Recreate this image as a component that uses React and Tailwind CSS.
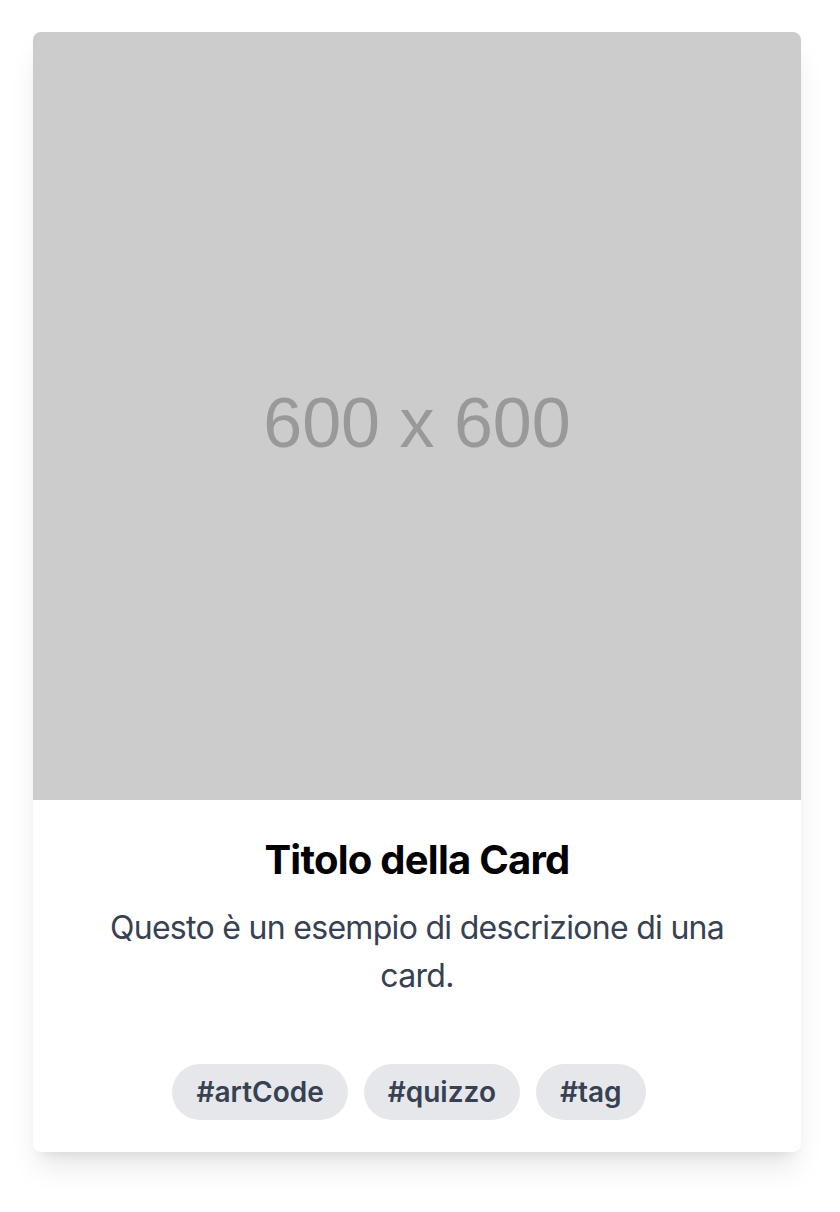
export default function App() {
  const tags = ["#artCode", "#quizzo", "#tag"];
  return (
    <div className="min-h-[1212px] bg-white pt-8 pl-[33px]" style={{ fontFamily: "Inter, 'Noto Sans', sans-serif" }}>
      <div className="w-[768px] rounded-lg overflow-hidden bg-white shadow-[0_20px_30px_-6px_rgb(0_0_0/0.1),0_8px_12px_-8px_rgb(0_0_0/0.1)]">
        <div className="w-[768px] h-[768px] bg-[#cccccc] flex items-center justify-center">
          <span
            className="text-[70px] leading-none text-[#999999] mt-[13px]"
            style={{ fontFamily: "'Liberation Sans', Arial, sans-serif" }}
          >
            600 x 600
          </span>
        </div>
        <div className="px-12 py-8 text-center">
          <div className="font-bold text-[40px] leading-[56px] tracking-[-0.75px] text-black mb-4">Titolo della Card</div>
          <p className="text-[32px] leading-[48px] tracking-[-0.7px] text-[#374151]">
            Questo è un esempio di descrizione di una card.
          </p>
        </div>
        <div className="px-12 pt-8 pb-4 text-center">
          {tags.map((t) => (
            <span
              key={t}
              className="inline-block bg-[#e5e7eb] rounded-full px-6 py-2 text-[28px] leading-[40px] font-semibold text-[#374151] mr-4 mb-4"
            >
              {t}
            </span>
          ))}
        </div>
      </div>
    </div>
  );
}
